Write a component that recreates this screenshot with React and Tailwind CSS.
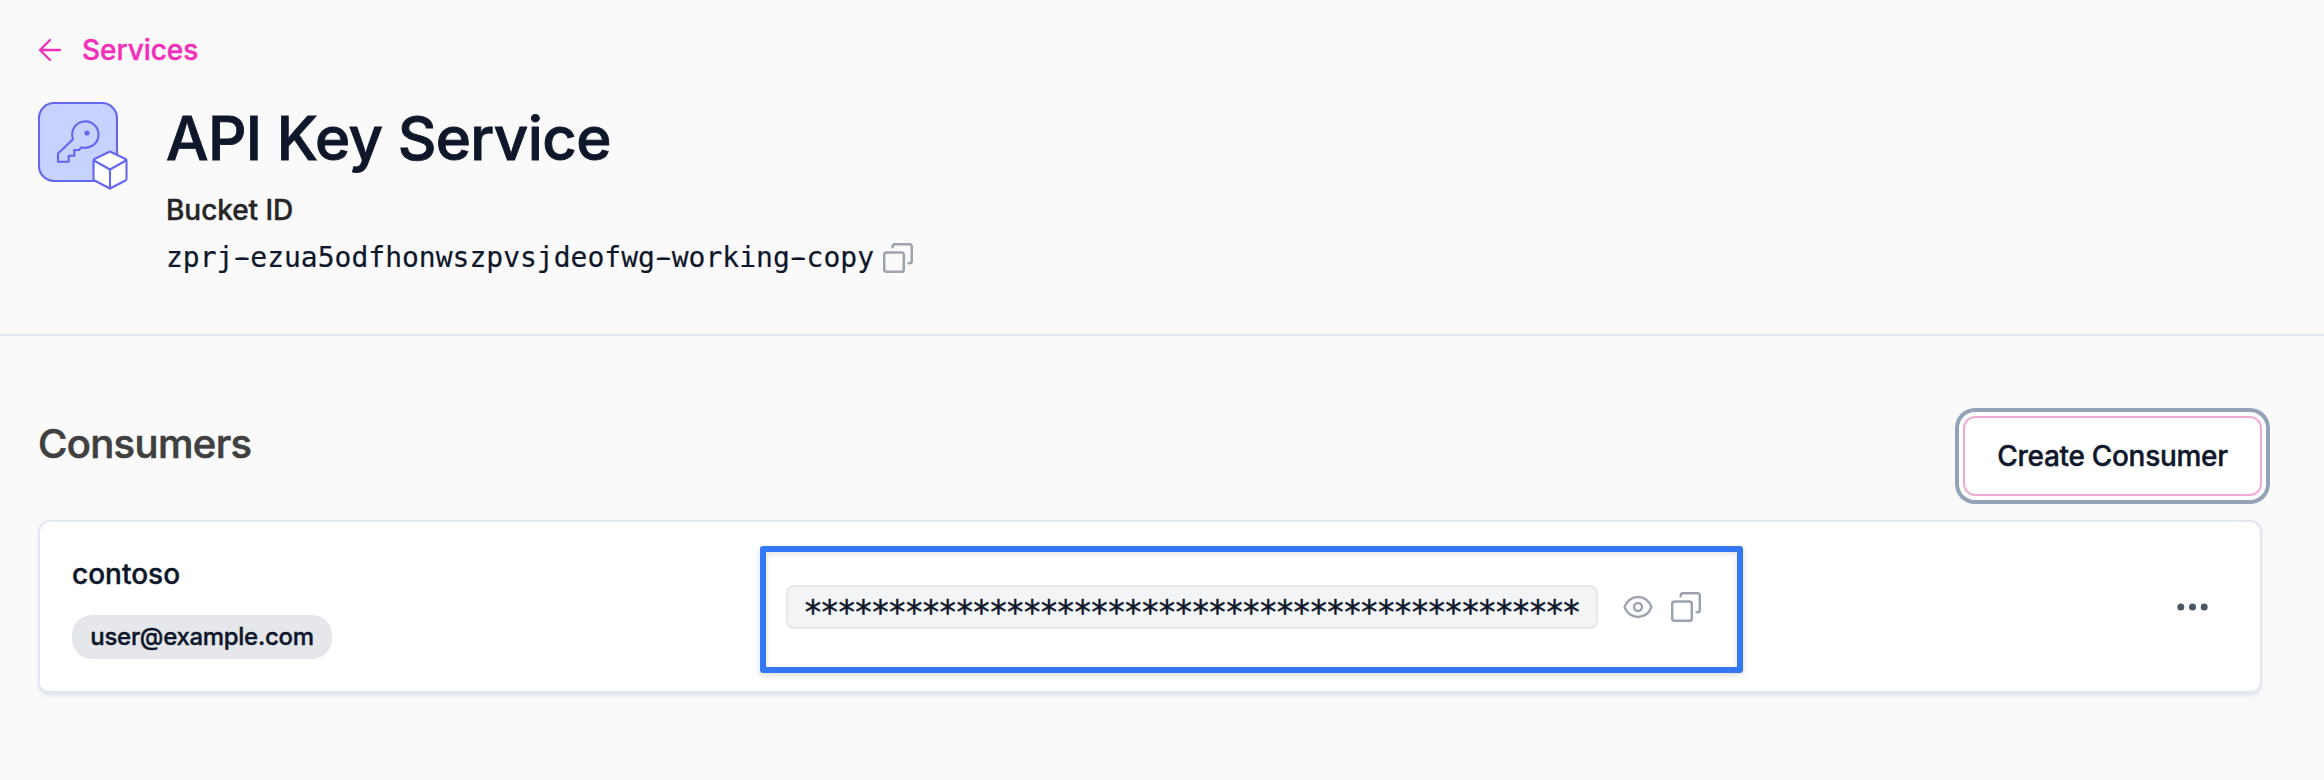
import React from "react";

const SANS = "font-['Inter','Liberation_Sans',sans-serif]";

function ArrowLeft() {
  return (
    <svg className="size-8" viewBox="0 0 32 32" fill="none" stroke="currentColor" strokeWidth="2.3" strokeLinecap="round" strokeLinejoin="round">
      <path d="M12 6 2 16l10 10M2 16h20" />
    </svg>
  );
}

function Copy() {
  return (
    <svg className="size-[30px] shrink-0 text-[#9ca3af]" viewBox="0 0 30 30" fill="none" stroke="currentColor" strokeWidth="2.5" strokeLinecap="round" strokeLinejoin="round">
      <rect x="1.2" y="9.400" width="19.600" height="19.400" rx="2.400" />
      <path d="M9.700 4.200V3.400a2.200 2.200 0 0 1 2.200-2.200h14.500a2.400 2.400 0 0 1 2.400 2.400v14.400a2.200 2.200 0 0 1-2.200 2.200h-.9" />
    </svg>
  );
}

function Eye() {
  return (
    <svg className="size-8 shrink-0 text-[#9ca3af]" viewBox="0 0 24 24" fill="none" stroke="currentColor" strokeWidth="1.8" strokeLinecap="round" strokeLinejoin="round">
      <path d="M2.036 12.322a1.012 1.012 0 0 1 0-.639C3.423 7.510 7.360 4.500 12 4.500c4.638 0 8.573 3.007 9.963 7.178.07.207.07.431 0 .639C20.577 16.490 16.640 19.500 12 19.500c-4.638 0-8.573-3.007-9.963-7.178Z" />
      <circle cx="12" cy="12" r="3" />
    </svg>
  );
}

function ServiceIcon() {
  return (
    <svg className="h-[88px] w-[90px] shrink-0" viewBox="38 102 90 88" fill="none" stroke="#6366f1" strokeWidth="2.1" strokeLinecap="round" strokeLinejoin="round">
      <rect x="39" y="103" width="78" height="78" rx="15" fill="#c7d2fe" />
      <path d="M73 139.200A13.200 13.200 0 1 1 81.500 147.200L79 150H74.300V155.700H68.700V161.700H58V153.500Z" />
      <circle cx="87" cy="133" r="1.500" fill="#6366f1" />
      <path d="M110 151.500 94.500 159a2 2 0 0 0-1 2v17.500a2 2 0 0 0 1 2L110 188.500l15.500-8a2 2 0 0 0 1-2V161a2 2 0 0 0-1-2Z" fill="#fff" />
      <path d="M94 160.500 110 169.500l16-9M110 169.500v19" />
    </svg>
  );
}

function Dash() {
  return <span className="[text-shadow:3px_0_currentColor,-3px_0_currentColor]">-</span>;
}

export default function App() {
  return (
    <div className={`${SANS} h-[780px] w-[2324px] overflow-hidden bg-[#fafafa] font-medium text-[#0f172a] [-webkit-text-stroke:0.4px_currentColor]`}>
      <header className="h-[336px] border-b-2 border-[#e2e8f0] px-[38px] pt-[30px]">
        <a className="flex h-10 items-center gap-3 text-[28px] leading-10 tracking-[-0.050px] text-[#f22fbb]">
          <ArrowLeft />
          <span className="[-webkit-text-stroke:0.4px_currentColor]">Services</span>
        </a>
        <div className="flex gap-[38px] pt-8">
          <ServiceIcon />
          <div>
            <h1 className="text-[60px] leading-[72px] tracking-[-0.650px] [-webkit-text-stroke:0.9px_currentColor]">API Key Service</h1>
            <div className="mt-4 text-[28px] leading-10 tracking-[-0.050px] text-[#262626] [-webkit-text-stroke:0.4px_currentColor]">Bucket ID</div>
            <div className="mt-2 flex items-center gap-[9px] font-['DejaVu_Sans_Mono',monospace] text-[28px] font-normal leading-10 [-webkit-text-stroke:0.2px_currentColor]">
              <span>zprj<Dash />ezua5odfhonwszpvsjdeofwg<Dash />working<Dash />copy</span>
              <Copy />
            </div>
          </div>
        </div>
      </header>

      <main className="pl-[38px] pr-[62px] pt-[80px]">
        <div className="flex h-[80px] justify-between">
          <h2 className="text-[40px] leading-[56px] tracking-[-0.650px] text-[#404040] [-webkit-text-stroke:0.6px_currentColor]">Consumers</h2>
          <button className="h-[80px] w-[299px] rounded-xl border-2 border-[#f0abd4] bg-white text-[28px] tracking-[-0.3px] whitespace-nowrap shadow-[0_0_0_4px_#ffffff,0_0_0_8px_#94a3b8]">
            Create Consumer
          </button>
        </div>

        <section className="mt-6 flex h-[175px] items-start rounded-xl border-2 border-b-4 border-[#e2e8f0] bg-white pl-8 pr-[52px] shadow-[0_2px_4px_rgba(0,0,0,0.06)]">
          <div className="w-[688px] pt-8">
            <div className="text-[28px] leading-10">contoso</div>
            <span className="mt-[21px] flex h-11 w-[260px] items-center justify-center rounded-[20px] bg-[#e5e7eb] text-[24px] tracking-[-0.3px]">user@example.com</span>
          </div>
          <div className="mt-6 flex h-[127px] w-[983px] items-center rounded-[3px] border-6 border-[#3478f6] pb-[5px] pl-5 shadow-[0_2px_6px_rgba(0,0,0,0.15),inset_0_2px_6px_rgba(0,0,0,0.12)]">
            <code className="flex h-11 w-[812px] items-center rounded-lg border-2 border-[#e5e7eb] bg-[#f3f4f6] pl-[15px] pt-[10px] font-['DejaVu_Sans_Mono',monospace] text-[33px] leading-none font-normal tracking-[-3.010px]">
              **********************************************
            </code>
            <div className="ml-[24px] flex items-center gap-[17px]">
              <Eye />
              <Copy />
            </div>
          </div>
          <svg className="mt-[81px] ml-auto h-2 w-[31px] fill-[#4b5563]" viewBox="0 0 31 8">
            <circle cx="3.800" cy="4" r="3.500" />
            <circle cx="15.500" cy="4" r="3.500" />
            <circle cx="27.200" cy="4" r="3.500" />
          </svg>
        </section>
      </main>
    </div>
  );
}
